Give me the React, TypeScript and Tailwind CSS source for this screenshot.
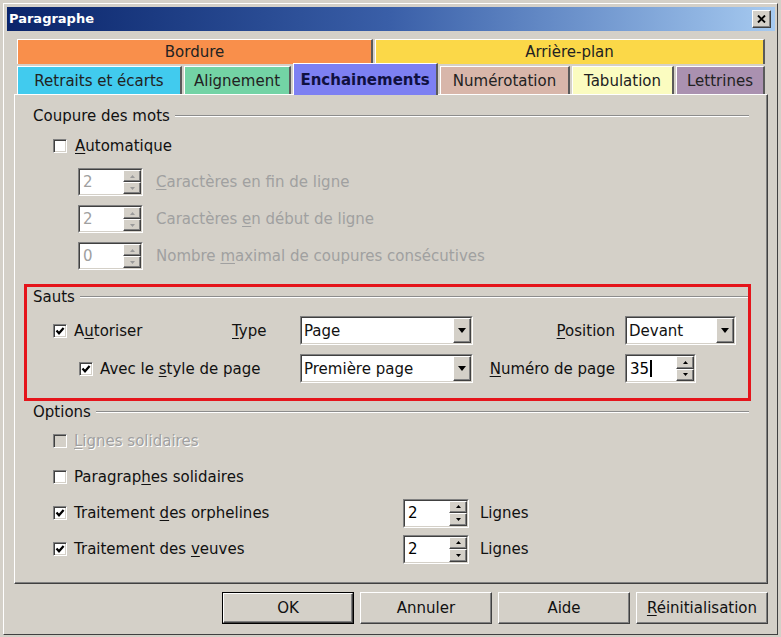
import React from "react";

function U({ c }: { c: string }) {
  return <span className="underline decoration-1 underline-offset-[2px]">{c}</span>;
}

function Check({ checked, disabled }: { checked?: boolean; disabled?: boolean }) {
  return (
    <span
      className={`inline-flex h-[14px] w-[14px] shrink-0 items-center justify-center border border-t-[#808080] border-l-[#808080] border-r-white border-b-white shadow-[inset_1px_1px_0_#404040,inset_-1px_-1px_0_#d4d0c8] ${
        disabled ? "bg-[#d4d0c8]" : "bg-white"
      }`}
    >
      {checked && (
        <svg width="10" height="10" viewBox="0 0 10 10">
          <path d="M1.5 4.5 L4 7.3 L8.6 2" fill="none" stroke="#000" strokeWidth="2.2" />
        </svg>
      )}
    </span>
  );
}

function Sunken({ className, children }: { className: string; children: React.ReactNode }) {
  return (
    <div className={`shrink-0 border border-t-[#808080] border-l-[#808080] border-r-white border-b-white ${className}`}>
      <div className="flex h-full w-full border border-t-[#404040] border-l-[#404040] border-r-[#d4d0c8] border-b-[#d4d0c8]">
        {children}
      </div>
    </div>
  );
}

function Raised({ className, children }: { className: string; children?: React.ReactNode }) {
  return (
    <div
      className={`flex items-center justify-center bg-[#d4d0c8] border border-t-white border-l-white border-r-[#404040] border-b-[#404040] shadow-[inset_-1px_-1px_0_#808080] ${className}`}
    >
      {children}
    </div>
  );
}

function Spin({
  className,
  value,
  disabled,
  cursor,
}: {
  className: string;
  value: string;
  disabled?: boolean;
  cursor?: boolean;
}) {
  const arrow = disabled ? "#9a9a9a" : "#000";
  return (
    <Sunken className={className}>
      <div className={`flex flex-1 items-center bg-white pl-[3px] ${disabled ? "text-[#a0a0a0]" : "text-black"}`}>
        <span>{value}</span>
        {cursor && <span className="ml-[1px] inline-block h-[17px] w-[2px] bg-black" />}
      </div>
      <div className="flex w-[18px] flex-col">
        <Raised className="flex-1">
          <svg width="5" height="3" viewBox="0 0 5 3">
            <path d="M2.5 0 L5 3 L0 3 Z" fill={arrow} />
          </svg>
        </Raised>
        <Raised className="flex-1">
          <svg width="5" height="3" viewBox="0 0 5 3">
            <path d="M0 0 L5 0 L2.5 3 Z" fill={arrow} />
          </svg>
        </Raised>
      </div>
    </Sunken>
  );
}

function Combo({ className, value }: { className: string; value: string }) {
  return (
    <Sunken className={className}>
      <div className="flex flex-1 items-center bg-white pl-[2px]">{value}</div>
      <Raised className="w-[18px]">
        <svg width="8" height="5" viewBox="0 0 8 5">
          <path d="M0 0 L8 0 L4 5 Z" fill="#000" />
        </svg>
      </Raised>
    </Sunken>
  );
}

function GroupHeader({ title }: { title: string }) {
  return (
    <div className="flex h-[18px] items-center gap-[5px]">
      <span>{title}</span>
      <div className="h-[2px] flex-1 border-t border-b border-t-[#8c8c8c] border-b-white" />
    </div>
  );
}

function Tab({ className, children }: { className: string; children: React.ReactNode }) {
  return (
    <div
      className={`flex items-center justify-center border-t border-l border-r-2 border-t-white border-l-white border-r-[#5a5a5a] ${className}`}
    >
      {children}
    </div>
  );
}

function Btn({ children, def }: { children: React.ReactNode; def?: boolean }) {
  if (def) {
    return (
      <div className="h-[32px] w-[132px] border border-black">
        <Raised className="h-full w-full">{children}</Raised>
      </div>
    );
  }
  return <Raised className="h-[32px] w-[132px]">{children}</Raised>;
}

function DisabledSpinRow({ label, value }: { label: React.ReactNode; value: string }) {
  return (
    <div className="flex h-[28px] items-center gap-[13px] pl-[45px]">
      <Spin className="h-[28px] w-[65px]" value={value} disabled />
      <span className="text-[#a0a0a0]">{label}</span>
    </div>
  );
}

export default function App() {
  return (
    <div className="h-[637px] w-[781px] bg-[#d4d0c8] pt-[3px] pl-[3px] pr-[3px] pb-[2px] text-[15px] leading-[18px] text-[#111] [font-family:'DejaVu_Sans',sans-serif]">
      <div className="flex h-full flex-col border border-t-white border-l-white border-r-[#404040] border-b-[#404040] pt-[3px] pl-[3px] pr-[2px]">
        {/* Title bar */}
        <div className="flex h-[24px] items-center justify-between bg-linear-to-r from-[#0a246a] via-[#3a5fa8] to-[#a6caf0] pl-[2px] pr-[4px]">
          <span className="text-[13px] font-bold text-white">Paragraphe</span>
          <Raised className="h-[18px] w-[19px]">
            <svg width="9" height="8" viewBox="0 0 9 8">
              <path d="M1 0.5 L8 7.5 M8 0.5 L1 7.5" stroke="#000" strokeWidth="1.9" />
            </svg>
          </Raised>
        </div>

        <div className="mt-[8px] flex flex-col px-[7px]">
          {/* Tabs */}
          <div className="flex flex-col px-[3px] text-[#222]">
            <div className="flex h-[25px] gap-[2px]">
              <Tab className="w-[356px] bg-[#f98f4b]">Bordure</Tab>
              <Tab className="flex-1 bg-[#fbd848]">Arrière-plan</Tab>
            </div>
            <div className="mt-[2px] flex h-[28px] items-end gap-[2px]">
              <Tab className="h-[28px] w-[165px] bg-[#41cbee]">Retraits et écarts</Tab>
              <Tab className="h-[28px] w-[107px] bg-[#73d3a5]">Alignement</Tab>
              <Tab className="relative z-10 -mb-[1px] h-[32px] w-[145px] bg-[#7d80f2] font-bold text-[#101040]">
                Enchainements
              </Tab>
              <Tab className="h-[28px] w-[130px] bg-[#d8b6aa]">Numérotation</Tab>
              <Tab className="h-[28px] w-[102px] bg-[#fbfcc0]">Tabulation</Tab>
              <Tab className="h-[28px] flex-1 bg-[#aa91b0]">Lettrines</Tab>
            </div>
          </div>

          {/* Panel */}
          <div className="h-[490px] border border-t-white border-l-white border-r-[#404040] border-b-[#404040] px-[18px] pt-[12px] shadow-[inset_-1px_-1px_0_#808080]">
            <GroupHeader title="Coupure des mots" />
            <div className="mt-[12px] flex h-[18px] items-center gap-[8px] pl-[20px]">
              <Check />
              <span>
                <U c="A" />
                utomatique
              </span>
            </div>
            <div className="mt-[13px] flex flex-col gap-[9px]">
              <DisabledSpinRow
                value="2"
                label={
                  <>
                    <U c="C" />
                    aractères en fin de ligne
                  </>
                }
              />
              <DisabledSpinRow
                value="2"
                label={
                  <>
                    Caractères <U c="e" />n début de ligne
                  </>
                }
              />
              <DisabledSpinRow
                value="0"
                label={
                  <>
                    Nombre <U c="m" />
                    aximal de coupures consécutives
                  </>
                }
              />
            </div>

            {/* Sauts - highlighted */}
            <div className="mt-[14px] -ml-[9px] -mr-[2px] border-[3px] border-[#e5141b] pt-[1px] pb-[15px] pl-[6px]">
              <GroupHeader title="Sauts" />
              <div className="mt-[10px] flex h-[29px] items-center">
                <div className="flex w-[199px] items-center gap-[7px] pl-[20px]">
                  <Check checked />
                  <span>
                    A<U c="u" />
                    toriser
                  </span>
                </div>
                <span className="w-[68px]">
                  <U c="T" />
                  ype
                </span>
                <Combo className="h-[29px] w-[173px]" value="Page" />
                <div className="flex flex-1 items-center justify-end gap-[10px] pr-[12px]">
                  <span>
                    <U c="P" />
                    osition
                  </span>
                  <Combo className="h-[29px] w-[111px]" value="Devant" />
                </div>
              </div>
              <div className="mt-[9px] flex h-[29px] items-center">
                <div className="flex w-[267px] items-center gap-[7px] pl-[46px]">
                  <Check checked />
                  <span>
                    Avec le <U c="s" />
                    tyle de page
                  </span>
                </div>
                <Combo className="h-[29px] w-[173px]" value="Première page" />
                <div className="flex flex-1 items-center justify-end gap-[10px] pr-[52px]">
                  <span>
                    <U c="N" />
                    uméro de page
                  </span>
                  <Spin className="h-[29px] w-[71px]" value="35" cursor />
                </div>
              </div>
            </div>

            {/* Options */}
            <div className="mt-[2px]">
              <GroupHeader title="Options" />
            </div>
            <div className="mt-[6px] flex flex-col gap-[8px]">
              <div className="flex h-[28px] items-center gap-[7px] pl-[20px]">
                <Check disabled />
                <span className="text-[#a0a0a0] [text-shadow:1px_1px_0_#ffffff]">
                  <U c="L" />
                  ignes solidaires
                </span>
              </div>
              <div className="flex h-[28px] items-center gap-[7px] pl-[20px]">
                <Check />
                <span>
                  Paragrap<U c="h" />
                  es solidaires
                </span>
              </div>
              <div className="flex h-[28px] items-center">
                <div className="flex w-[370px] items-center gap-[7px] pl-[20px]">
                  <Check checked />
                  <span>
                    Traitement <U c="d" />
                    es orphelines
                  </span>
                </div>
                <Spin className="h-[29px] w-[66px]" value="2" />
                <span className="ml-[11px]">Lignes</span>
              </div>
              <div className="flex h-[28px] items-center">
                <div className="flex w-[370px] items-center gap-[7px] pl-[20px]">
                  <Check checked />
                  <span>
                    Traitement des <U c="v" />
                    euves
                  </span>
                </div>
                <Spin className="h-[29px] w-[66px]" value="2" />
                <span className="ml-[11px]">Lignes</span>
              </div>
            </div>
          </div>

          {/* Buttons */}
          <div className="mt-[8px] flex justify-end gap-[6px]">
            <Btn def>OK</Btn>
            <Btn>Annuler</Btn>
            <Btn>Aide</Btn>
            <Btn>
              <span>
                <U c="R" />
                éinitialisation
              </span>
            </Btn>
          </div>
        </div>
      </div>
    </div>
  );
}
